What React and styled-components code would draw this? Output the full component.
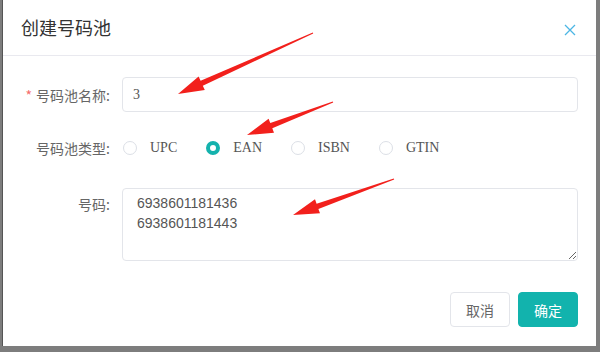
import React from 'react'
import styled, { createGlobalStyle } from 'styled-components'

const GlobalStyle = createGlobalStyle`
    html, body {
        margin: 0;
        padding: 0;
        background: #7d7d7d;
        font-family: "Liberation Sans", "Noto Sans CJK SC", sans-serif;
    }
`

const arrows = [
    { from: [313, 33], to: [178, 94] },
    { from: [333, 102], to: [247, 135] },
    { from: [394, 179], to: [293, 215] },
]

function arrowPoints({ from, to }) {
    const [tx, ty] = from
    const [px, py] = to
    const len = Math.hypot(px - tx, py - ty)
    const dx = (px - tx) / len
    const dy = (py - ty) / len
    const nx = -dy
    const ny = dx
    const L = 26, w0 = 1.2, w1 = 5.5, H = 15
    const bx = px - dx * L
    const by = py - dy * L
    const pts = [
        [tx + nx * w0 / 2, ty + ny * w0 / 2],
        [bx + nx * w1 / 2, by + ny * w1 / 2],
        [bx + nx * H / 2, by + ny * H / 2],
        [px, py],
        [bx - nx * H / 2, by - ny * H / 2],
        [bx - nx * w1 / 2, by - ny * w1 / 2],
        [tx - nx * w0 / 2, ty - ny * w0 / 2],
    ]
    return pts.map(p => p.map(v => v.toFixed(1)).join(',')).join(' ')
}

const types = ['UPC', 'EAN', 'ISBN', 'GTIN']

function App() {
    return (
        <Stage>
            <GlobalStyle />
            <Dialog>
                <Header>
                    <Title>创建号码池</Title>
                    <Close aria-label="close">
                        <svg width="12" height="12" viewBox="0 0 12 12">
                            <path d="M1 1L11 11M11 1L1 11" stroke="#4cb6e4" strokeWidth="1.3" />
                        </svg>
                    </Close>
                </Header>
                <Form>
                    <Row $mb={20}>
                        <Label><Star>*</Star>号码池名称:</Label>
                        <Input defaultValue="3" readOnly />
                    </Row>
                    <Row $mb={24} $h={32}>
                        <Label>号码池类型:</Label>
                        <RadioGroup>
                            {types.map(t => (
                                <RadioItem key={t}>
                                    <Radio $checked={t === 'EAN'} />
                                    <RadioText>{t}</RadioText>
                                </RadioItem>
                            ))}
                        </RadioGroup>
                    </Row>
                    <Row $top>
                        <Label $pt={6}>号码:</Label>
                        <Textarea readOnly defaultValue={'6938601181436\n6938601181443'} />
                    </Row>
                </Form>
                <Footer>
                    <Button>取消</Button>
                    <Button $primary>确定</Button>
                </Footer>
            </Dialog>
            <Overlay width="600" height="352" viewBox="0 0 600 352">
                {arrows.map((a, i) => (
                    <polygon key={i} points={arrowPoints(a)} fill="#f2201c" />
                ))}
            </Overlay>
        </Stage>
    )
}

export default App

const Stage = styled.div`
    position: relative;
    width: 600px;
    height: 352px;
    overflow: hidden;
`

const Dialog = styled.div`
    margin-left: 2px;
    width: 594px;
    height: 346px;
    background: #fff;
    border-left: 1px solid #555;
    box-sizing: border-box;
    display: flex;
    flex-direction: column;
`

const Header = styled.div`
    height: 56px;
    box-sizing: border-box;
    border-bottom: 1px solid #e9e9ef;
    display: flex;
    align-items: center;
    justify-content: space-between;
    padding: 0 20px 0 18px;
`

const Title = styled.div`
    font-family: "Noto Sans CJK SC", sans-serif;
    font-size: 18px;
    color: #333;
    margin-top: -2px;
`

const Close = styled.div`
    display: flex;
    margin-top: 4px;
`

const Form = styled.div`
    padding: 21px 18px 0 0;
    display: flex;
    flex-direction: column;
`

const Row = styled.div`
    display: grid;
    grid-template-columns: 107px 1fr;
    column-gap: 12px;
    align-items: ${p => (p.$top ? 'start' : 'center')};
    margin-bottom: ${p => p.$mb || 0}px;
    height: ${p => (p.$h ? `${p.$h}px` : 'auto')};
`

const Label = styled.div`
    font-family: "Noto Sans CJK SC", sans-serif;
    font-size: 14px;
    color: #666;
    text-align: right;
    line-height: 20px;
    padding-top: ${p => p.$pt || 0}px;
`

const Star = styled.span`
    color: #f56c6c;
    margin-right: 4px;
`

const Input = styled.input`
    height: 35px;
    box-sizing: border-box;
    border: 1px solid #e3e5ea;
    border-radius: 4px;
    padding: 0 10px;
    font-family: "Liberation Serif", serif;
    font-size: 14px;
    color: #555;
    outline: none;
`

const RadioGroup = styled.div`
    display: flex;
    align-items: center;
    padding-left: 1px;
`

const RadioItem = styled.label`
    display: flex;
    align-items: center;
    margin-right: 29px;
`

const Radio = styled.span`
    width: 14px;
    height: 14px;
    box-sizing: border-box;
    border-radius: 50%;
    border: ${p => (p.$checked ? '4px solid #14b2ad' : '1px solid #dcdfe6')};
    background: #fff;
    margin-right: 13px;
`

const RadioText = styled.span`
    font-family: "Liberation Serif", serif;
    font-size: 14px;
    color: #555;
`

const Textarea = styled.textarea`
    height: 73px;
    box-sizing: border-box;
    border: 1px solid #e3e5ea;
    border-radius: 4px;
    padding: 4px 14px;
    font-family: "Liberation Sans", sans-serif;
    font-size: 14px;
    line-height: 20px;
    color: #555;
    outline: none;
    resize: vertical;
`

const Footer = styled.div`
    display: flex;
    justify-content: flex-end;
    gap: 8px;
    padding: 31px 18px 0 0;
`

const Button = styled.div`
    width: 60px;
    height: 35px;
    box-sizing: border-box;
    border-radius: 4px;
    border: 1px solid ${p => (p.$primary ? '#12b3ad' : '#e3e5ea')};
    background: ${p => (p.$primary ? '#12b3ad' : '#fff')};
    color: ${p => (p.$primary ? '#fff' : '#666')};
    font-family: "Noto Sans CJK SC", sans-serif;
    font-size: 14px;
    display: flex;
    align-items: center;
    justify-content: center;
`

const Overlay = styled.svg`
    position: absolute;
    left: 0;
    top: 0;
    pointer-events: none;
`
